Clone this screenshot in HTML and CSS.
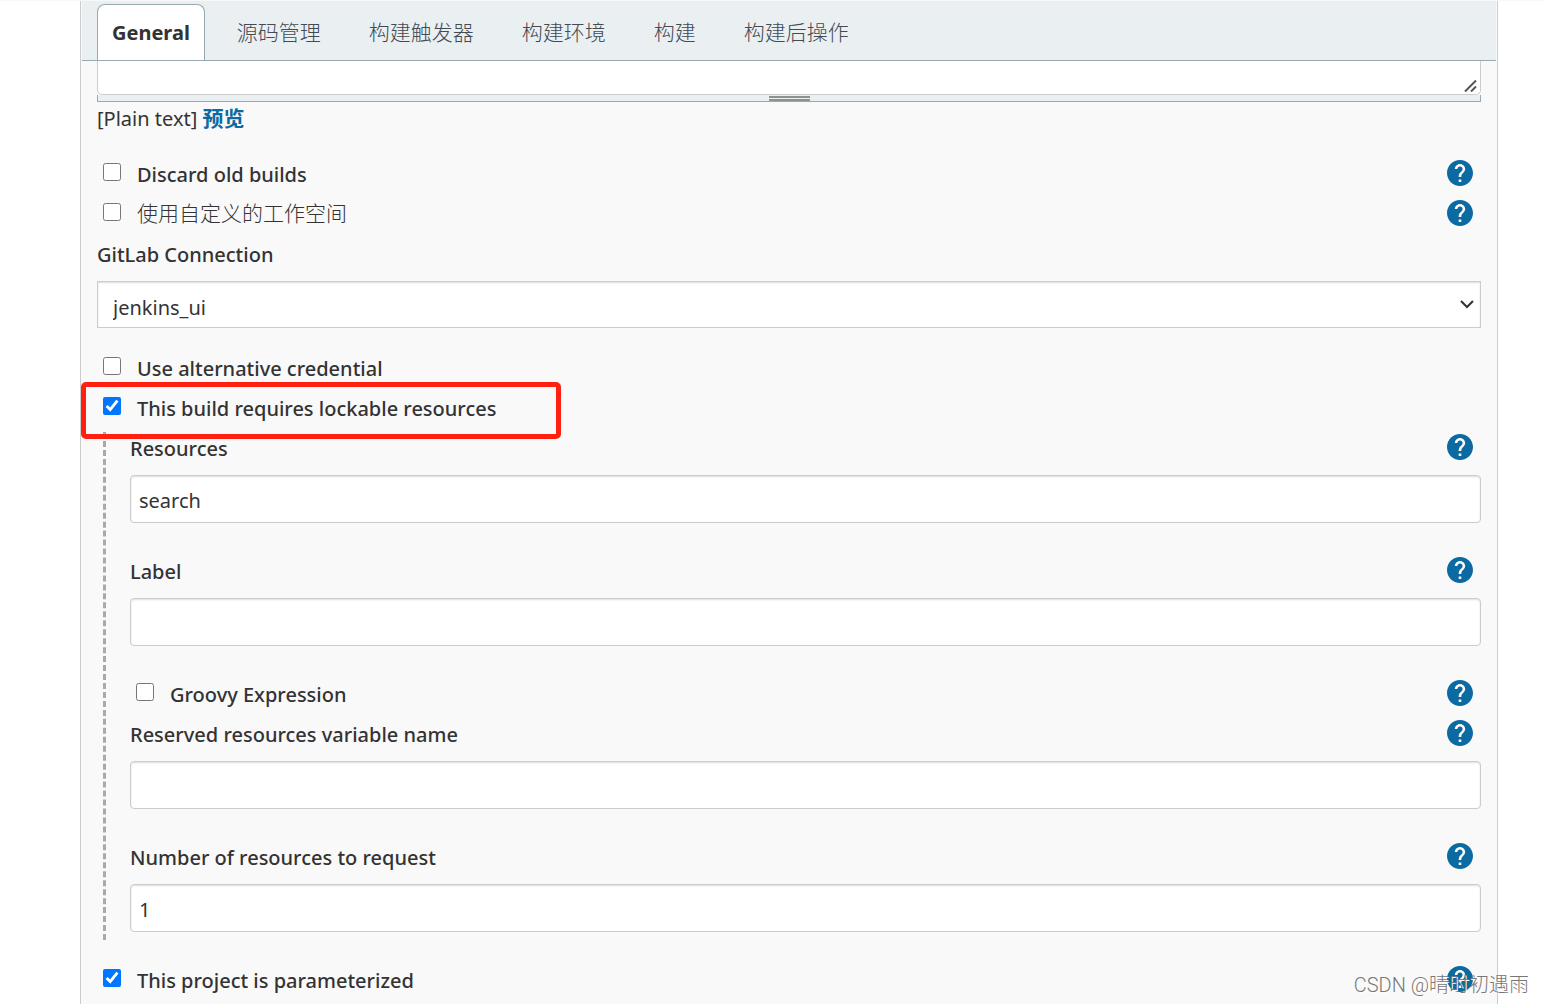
FILE: index.html
```html
<!DOCTYPE html>
<html lang="zh-CN">
<head>
<meta charset="utf-8">
<title>General</title>
<link rel="stylesheet" href="styles.css">
</head>
<body>
<svg class="defs" aria-hidden="true">
  <symbol id="help" viewBox="2 2 20 20">
    <path d="M12 2C6.48 2 2 6.48 2 12s4.480 10 10 10 10-4.480 10-10S17.520 2 12 2zm1 17h-2v-2h2v2zm2.070-7.750l-.9.920C13.450 12.900 13 13.500 13 15h-2v-.5c0-1.100.450-2.100 1.170-2.830l1.240-1.260c.370-.360.590-.860.590-1.410 0-1.100-.9-2-2-2s-2 .9-2 2H8c0-2.210 1.790-4 4-4s4 1.790 4 4c0 .880-.360 1.680-.930 2.250z"/>
  </symbol>
</svg>
<main class="panel">
  <nav class="tabs">
    <a class="tab tab-active" href="#general">General</a>
    <a class="tab" href="#scm">源码管理</a>
    <a class="tab" href="#triggers">构建触发器</a>
    <a class="tab" href="#environment">构建环境</a>
    <a class="tab" href="#build">构建</a>
    <a class="tab" href="#post-build">构建后操作</a>
  </nav>
  <form class="form">
    <div class="description">
      <textarea class="description-text" aria-label="Description"></textarea>
      <svg class="corner" viewBox="0 0 14 14" aria-hidden="true"><path d="M1 12.500L12 1.500M7 12.500L12 7.500"/></svg>
    </div>
    <div class="handle"><span class="grip"></span></div>
    <div class="preview">[Plain text] <a class="preview-link" href="#preview">预览</a></div>

    <div class="row">
      <input class="check" type="checkbox" id="discard"><label class="label" for="discard">Discard old builds</label>
      <button class="help" type="button" aria-label="Help"><svg class="help-icon"><use href="#help"/></svg></button>
    </div>
    <div class="row">
      <input class="check" type="checkbox" id="workspace"><label class="label-cjk" for="workspace">使用自定义的工作空间</label>
      <button class="help" type="button" aria-label="Help"><svg class="help-icon"><use href="#help"/></svg></button>
    </div>
    <div class="row"><label class="label" for="gitlab">GitLab Connection</label></div>
    <div class="select-wrap">
      <select class="select" id="gitlab"><option>jenkins_ui</option></select>
      <svg class="chevron" viewBox="0 0 14 9" aria-hidden="true"><path d="M1 1l6 6 6-6"/></svg>
    </div>
    <div class="row">
      <input class="check" type="checkbox" id="credential"><label class="label" for="credential">Use alternative credential</label>
    </div>
    <div class="row">
      <input class="check" type="checkbox" id="lockable" checked><label class="label" for="lockable">This build requires lockable resources</label>
      <span class="highlight"></span>
    </div>
    <div class="nested">
      <div class="rail"></div>
      <div class="nested-body">
        <div class="row">
          <label class="label" for="resources">Resources</label>
          <button class="help" type="button" aria-label="Help"><svg class="help-icon"><use href="#help"/></svg></button>
        </div>
        <input class="text" type="text" id="resources" value="search">
        <div class="row">
          <label class="label" for="label">Label</label>
          <button class="help" type="button" aria-label="Help"><svg class="help-icon"><use href="#help"/></svg></button>
        </div>
        <input class="text" type="text" id="label">
        <div class="row">
          <input class="check" type="checkbox" id="groovy"><label class="label" for="groovy">Groovy Expression</label>
          <button class="help" type="button" aria-label="Help"><svg class="help-icon"><use href="#help"/></svg></button>
        </div>
        <div class="row">
          <label class="label" for="variable">Reserved resources variable name</label>
          <button class="help" type="button" aria-label="Help"><svg class="help-icon"><use href="#help"/></svg></button>
        </div>
        <input class="text" type="text" id="variable">
        <div class="row">
          <label class="label" for="number">Number of resources to request</label>
          <button class="help" type="button" aria-label="Help"><svg class="help-icon"><use href="#help"/></svg></button>
        </div>
        <input class="text" type="text" id="number" value="1">
      </div>
    </div>
    <div class="row">
      <input class="check" type="checkbox" id="parameterized" checked><label class="label" for="parameterized">This project is parameterized</label>
      <button class="help" type="button" aria-label="Help"><svg class="help-icon"><use href="#help"/></svg></button>
    </div>
  </form>
</main>
<div class="watermark">CSDN @晴时初遇雨</div>
</body>
</html>
```
FILE: styles.css
```css
* { box-sizing: border-box; }

body {
  margin: 0;
  border-top: 1px solid #f8f8f8;
  background: #fff;
  color: #333;
  font-family: "Noto Sans", "Noto Sans CJK SC", sans-serif;
  font-size: 20px;
  line-height: 28px;
}

.defs { display: none; }

.panel {
  margin: 0 46px 0 80px;
  min-height: calc(100vh - 1px);
  border: 1px solid #ccc;
  border-width: 0 1px;
  background: #f9f9f9;
}

.tabs {
  display: flex;
  align-items: flex-end;
  gap: 16px;
  height: 60px;
  margin: 0 1px;
  padding: 0 15px;
  border-bottom: 1px solid #98a9b3;
  background: #eaeff2;
}

.tab {
  height: 56px;
  padding: 0 15px;
  border: 1px solid transparent;
  border-bottom: 0;
  border-radius: 8px 8px 0 0;
  color: #434a54;
  font-size: 21px;
  font-weight: 300;
  line-height: 55px;
  text-decoration: none;
  white-space: nowrap;
}

.tab-active {
  padding: 0 14px;
  border-color: #98a9b3;
  background: #fff;
  color: #333;
  font-size: 20px;
  font-weight: 700;
}

.form { padding: 0 16px; }

.description { position: relative; }

.description-text {
  display: block;
  width: 100%;
  height: 34px;
  border: 1px solid #ccc;
  border-top: 0;
  border-radius: 0 0 5px 5px;
  background: #fff;
  font: inherit;
  resize: none;
}

.corner {
  position: absolute;
  right: 3px;
  bottom: 2px;
  width: 14px;
  height: 14px;
  fill: none;
  stroke: #555;
  stroke-width: 2;
}

.handle {
  display: flex;
  justify-content: center;
  height: 7px;
  border: 1px solid #98a9b3;
  border-top: 0;
  background: #eaeff2;
}

.grip {
  width: 41px;
  height: 5px;
  margin-top: 1px;
  border: 2px solid #8f938c;
  border-width: 2px 0;
}

.preview {
  height: 51px;
  line-height: 32px;
}

.preview-link {
  color: #0b6aa2;
  font-size: 21px;
  font-weight: 700;
  text-decoration: none;
}

.row {
  position: relative;
  display: flex;
  align-items: center;
  height: 40px;
  font-weight: 500;
}

.check {
  width: 18px;
  height: 18px;
  margin: 0 16px 2px 6px;
}

.label { padding-top: 3px; }

.label-cjk {
  font-size: 21px;
  font-weight: 300;
}

.help {
  display: flex;
  margin: 0 8px 0 auto;
  padding: 0;
  border: 0;
  background: none;
}

.help-icon {
  width: 26px;
  height: 26px;
  fill: #0b6aa2;
}

.select-wrap {
  position: relative;
  margin: 8px 0 19px;
}

.select {
  display: block;
  width: 100%;
  height: 47px;
  padding: 6px 40px 0 15px;
  border: 1px solid #ccc;
  border-radius: 0;
  background: #fff;
  box-shadow: inset 0 1px 2px #ddd;
  color: #333;
  font: inherit;
  appearance: none;
}

.chevron {
  position: absolute;
  top: 19px;
  right: 7px;
  width: 14px;
  height: 9px;
  fill: none;
  stroke: #333;
  stroke-width: 2;
}

.highlight {
  position: absolute;
  top: -5px;
  left: -16px;
  z-index: 1;
  width: 480px;
  height: 57px;
  border: 5px solid #ff2012;
  border-radius: 5px;
  pointer-events: none;
}

.nested { display: flex; }

.rail {
  margin: 5px 24px 19px 6px;
  border-left: 3px dashed #a9a9a9;
}

.nested-body { flex: 1; }

.text {
  display: block;
  width: 100%;
  height: 48px;
  margin: 8px 0 27px;
  padding: 2px 8px 0;
  border: 1px solid #ccc;
  border-radius: 4px;
  background: #fff;
  box-shadow: inset 0 1px 2px #ddd;
  color: #333;
  font: inherit;
}

.watermark {
  position: absolute;
  right: 15px;
  bottom: 5px;
  color: #777;
  font-family: Roboto, "Noto Sans CJK SC", sans-serif;
  font-size: 20px;
  font-weight: 300;
  text-shadow: 1px 1px 0 #fff;
}
```
